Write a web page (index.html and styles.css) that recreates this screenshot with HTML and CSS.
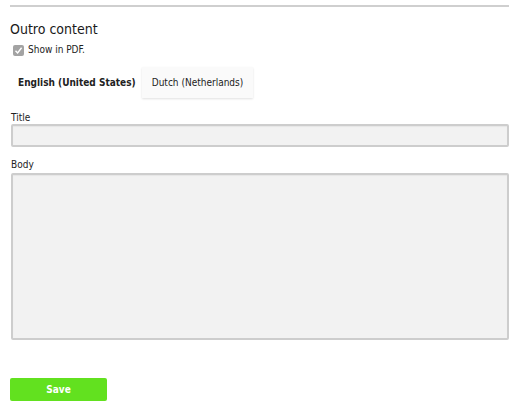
FILE: index.html
```html
<!DOCTYPE html>
<html>
<head>
<meta charset="utf-8">
<link rel="stylesheet" href="styles.css">
</head>
<body>
<div class="page">
  <hr class="rule">
  <h2 class="heading">Outro content</h2>
  <label class="check">
    <span class="box"><svg width="9" height="9" viewBox="0 0 9 9"><path d="M1.5 4.8 L3.6 7 L7.6 1.8" fill="none" stroke="#fff" stroke-width="1.4"/></svg></span>
    <span>Show in PDF.</span>
  </label>
  <div class="tabs">
    <div class="tab active">English (United States)</div>
    <div class="tab">Dutch (Netherlands)</div>
  </div>
  <div class="field">
    <div class="label">Title</div>
    <div class="input"></div>
  </div>
  <div class="field">
    <div class="label">Body</div>
    <div class="input textarea"></div>
  </div>
  <button class="save">Save</button>
</div>
</body>
</html>
```
FILE: styles.css
```css
html, body { margin: 0; padding: 0; background: #fff; }
body { font-family: "DejaVu Sans Condensed", "DejaVu Sans", Verdana, sans-serif; color: #222; }
.page { padding: 5px 13px 0 10px; }
.rule { margin: 0; border: 0; height: 2px; background: #cfcfcf; }
.heading { margin: 13px 0 0 0; font-weight: normal; font-size: 14px; line-height: 18px; color: #1a1a1a; }
.check { display: flex; align-items: center; gap: 4px; margin: 6px 0 0 3px; font-size: 10px; line-height: 12px; color: #222; }
.box { width: 11px; height: 11px; background: #a3a3a3; border-radius: 2px; display: flex; align-items: center; justify-content: center; }
.tabs { display: flex; margin-top: 11px; height: 31px; }
.tab { display: flex; align-items: center; font-size: 10px; color: #222; }
.tab.active { font-weight: bold; width: 132px; box-sizing: border-box; padding-left: 8px; }
.tab.inactive { }
.tab:not(.active) { background: #fafafa; box-shadow: 0 1px 2px rgba(0,0,0,0.12); width: 111px; justify-content: center; }
.field { margin-left: 1px; }
.label { font-size: 10px; line-height: 12px; margin-top: 14px; color: #222; }
.field + .field .label { margin-top: 12px; }
.input { margin-top: 0; height: 19px; background: #f2f2f2; border: 2px solid #cdcdcd; border-radius: 2px; box-shadow: inset 0 1px 1px rgba(0,0,0,0.05); }
.textarea { margin-top: 2px; height: 163px; }
.save { display: block; margin: 38px 0 0 0; width: 97px; height: 23px; border: 0; border-radius: 2px; background: #62e11f; color: #fff; font-family: inherit; font-weight: bold; font-size: 10px; padding: 0; }
```
